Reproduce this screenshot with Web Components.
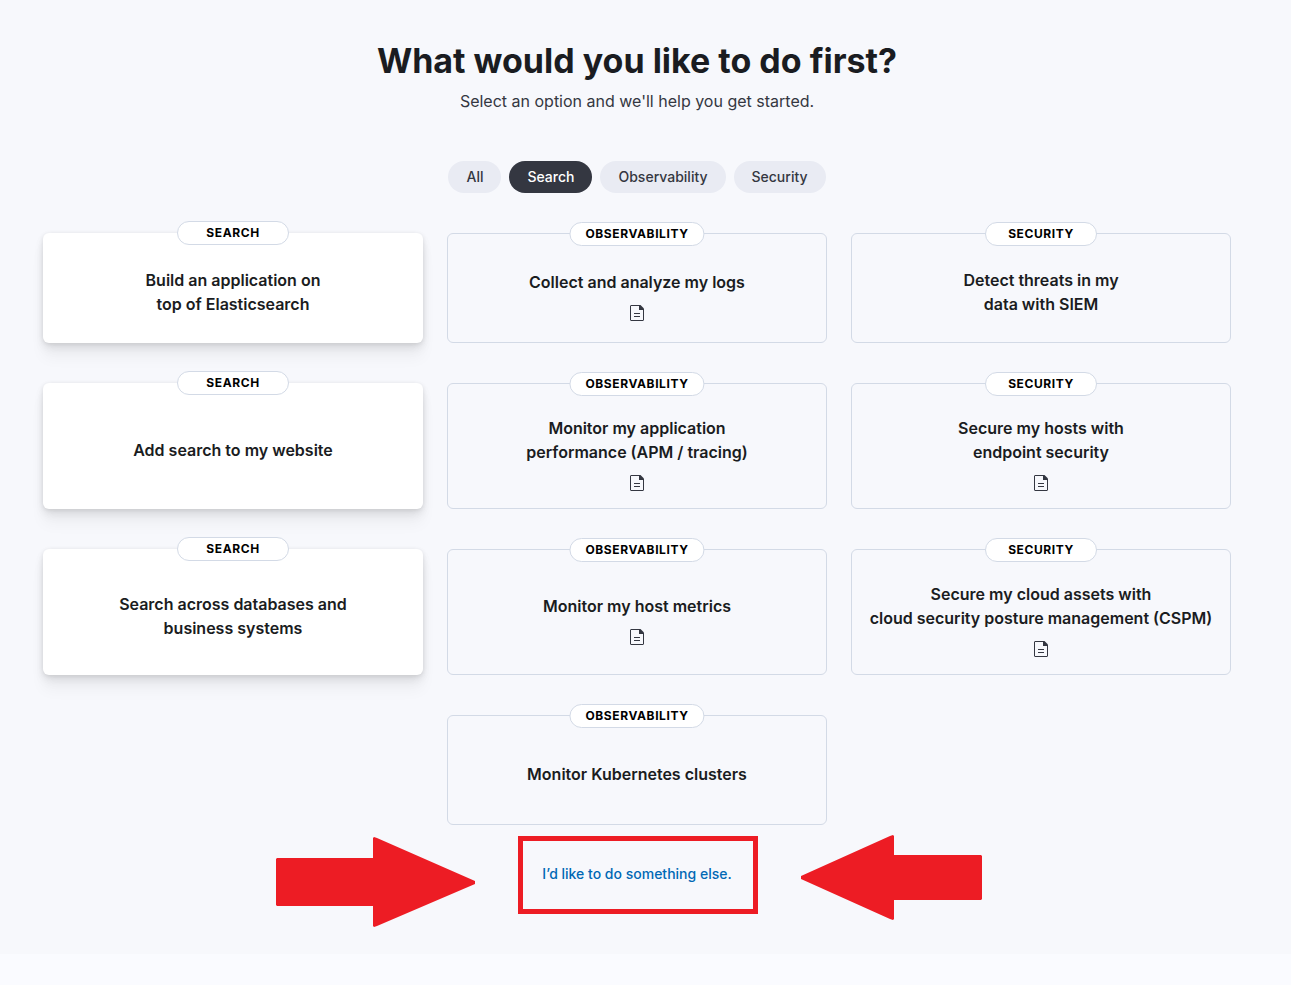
<!DOCTYPE html>
<html lang="en">
<head>
<meta charset="utf-8">
<title>Get started</title>
<style>
  html { background: #fafbff; }
  body { margin: 0; color: #1a1c21; font: 16px/24px Inter, "Liberation Sans", sans-serif; }
</style>
</head>
<body>
<start-page>
  <filter-bar>
    <filter-pill>All</filter-pill>
    <filter-pill active>Search</filter-pill>
    <filter-pill>Observability</filter-pill>
    <filter-pill>Security</filter-pill>
  </filter-bar>
  <card-grid>
    <guide-card highlight tag="Search">Build an application on<br>top of Elasticsearch</guide-card>
    <guide-card docs tag="Observability">Collect and analyze my logs</guide-card>
    <guide-card tag="Security">Detect threats in my<br>data with SIEM</guide-card>
    <guide-card highlight tag="Search">Add search to my website</guide-card>
    <guide-card docs tag="Observability">Monitor my application<br>performance (APM / tracing)</guide-card>
    <guide-card docs tag="Security">Secure my hosts with<br>endpoint security</guide-card>
    <guide-card highlight tag="Search">Search across databases and<br>business systems</guide-card>
    <guide-card docs tag="Observability">Monitor my host metrics</guide-card>
    <guide-card docs tag="Security">Secure my cloud assets with<br>cloud security posture management (CSPM)</guide-card>
    <guide-card middle tag="Observability">Monitor Kubernetes clusters</guide-card>
  </card-grid>
  <skip-link>I’d like to do something else.</skip-link>
</start-page>

<script>
  const define = (name, html, setup) => {
    const template = document.createElement('template');
    template.innerHTML = html;
    customElements.define(name, class extends HTMLElement {
      constructor() {
        super();
        this.attachShadow({ mode: 'open' }).append(template.content.cloneNode(true));
      }
      connectedCallback() { if (setup) setup(this, this.shadowRoot); }
    });
  };

  define('start-page', `
    <style>
      :host { display: block; background: #f7f8fc; padding: 40px 41px 0 24px; }
      main { max-width: 1188px; margin: 0 auto; }
      header { text-align: center; margin-bottom: 48px; }
      h1 { margin: 0 0 8px; font-size: 34px; line-height: 41px; font-weight: 700; }
      p { margin: 0; color: #343741; font-weight: 400; }
    </style>
    <main>
      <header>
        <h1>What would you like to do first?</h1>
        <p>Select an option and we'll help you get started.</p>
      </header>
      <slot></slot>
    </main>`);

  define('filter-bar', `
    <style>:host { display: flex; justify-content: center; gap: 8px; margin-bottom: 40px; }</style>
    <slot></slot>`);

  define('filter-pill', `
    <style>
      :host { display: block; }
      button { display: block; height: 32px; padding: 0 18px; border: 0; border-radius: 16px;
        background: #e9ebf3; color: #343741; font: 500 14px/32px Inter, sans-serif; cursor: pointer; }
      :host([active]) button { background: #343741; color: #fff; }
    </style>
    <button type="button"><slot></slot></button>`,
    (el, root) => root.querySelector('button').setAttribute('aria-pressed', el.hasAttribute('active')));

  define('card-grid', `
    <style>:host { display: grid; grid-template-columns: repeat(3, minmax(0, 1fr)); gap: 40px 24px; }</style>
    <slot></slot>`);

  define('guide-card', `
    <style>
      :host { display: flex; flex-direction: column; align-items: center; justify-content: center;
        position: relative; box-sizing: border-box; min-height: 110px; padding: 32px 16px 24px;
        border: 1px solid #d3dae6; border-radius: 6px; text-align: center; }
      :host([docs]) { padding-bottom: 17px; }
      :host([middle]) { grid-column: 2; }
      :host([highlight]) { border: 0; padding: 33px 17px 25px; background: #fff;
        box-shadow: 0 1px 4px rgba(0, 0, 0, .08), 0 3px 8px rgba(0, 0, 0, .06),
          0 6px 12px rgba(0, 0, 0, .05), 0 15px 15px rgba(0, 0, 0, .04); }
      .tag { position: absolute; top: -12px; left: 50%; transform: translateX(-50%);
        box-sizing: border-box; min-width: 112px; height: 24px; padding: 0 15px;
        border: 1px solid #d3dae6; border-radius: 12px; background: #fff; color: #000;
        font-size: 12px; line-height: 22px; font-weight: 700; letter-spacing: .05em;
        text-transform: uppercase; white-space: nowrap; }
      button { display: block; padding: 0; border: 0; background: none; color: inherit;
        font: 600 16px/24px Inter, sans-serif; white-space: nowrap; cursor: pointer; }
      a { display: none; margin-top: 11px; color: #343741; }
      :host([docs]) a { display: block; }
      svg { display: block; }
    </style>
    <span class="tag"></span>
    <button type="button"><slot></slot></button>
    <a href="#docs" aria-label="Documentation">
      <svg width="16" height="16" viewBox="0 0 16 16" fill="none" stroke="currentColor">
        <path d="M10 .5H2a.5.5 0 0 0-.5.5v14a.5.5 0 0 0 .5.5h12a.5.5 0 0 0 .5-.5V5"/>
        <path d="M10 0h1.500l3.500 3.500V5h-5z" fill="currentColor" stroke="none"/>
        <path d="M5 8.500h6M5 11.500h6"/>
      </svg>
    </a>`,
    (el, root) => { root.querySelector('.tag').textContent = el.getAttribute('tag'); });

  define('skip-link', `
    <style>
      :host { display: flex; justify-content: center; position: relative; padding: 39px 0 70px; }
      a { color: #0068b5; font-size: 14px; line-height: 20px; font-weight: 500; text-decoration: none; }
      .marks { position: absolute; top: 10px; left: 50%; margin-left: -361px; pointer-events: none; }
    </style>
    <a href="#other"><slot></slot></a>
    <svg class="marks" width="707" height="93" viewBox="276 835 707 93" fill="#ed1c24" aria-hidden="true">
      <path d="M277 858H373V838l1-1 3 1 98 43v3l-98 42-3 1-1-1V906H277l-1-1V859z"/>
      <path d="M981 855H894V836l-1-1-3 1-89 40v3l89 40 3 1 1-1V900h87l1-1V856z"/>
      <path d="M518 836h240v78H518zm5 5v68h230v-68z" fill-rule="evenodd"/>
    </svg>`);
</script>
</body>
</html>
